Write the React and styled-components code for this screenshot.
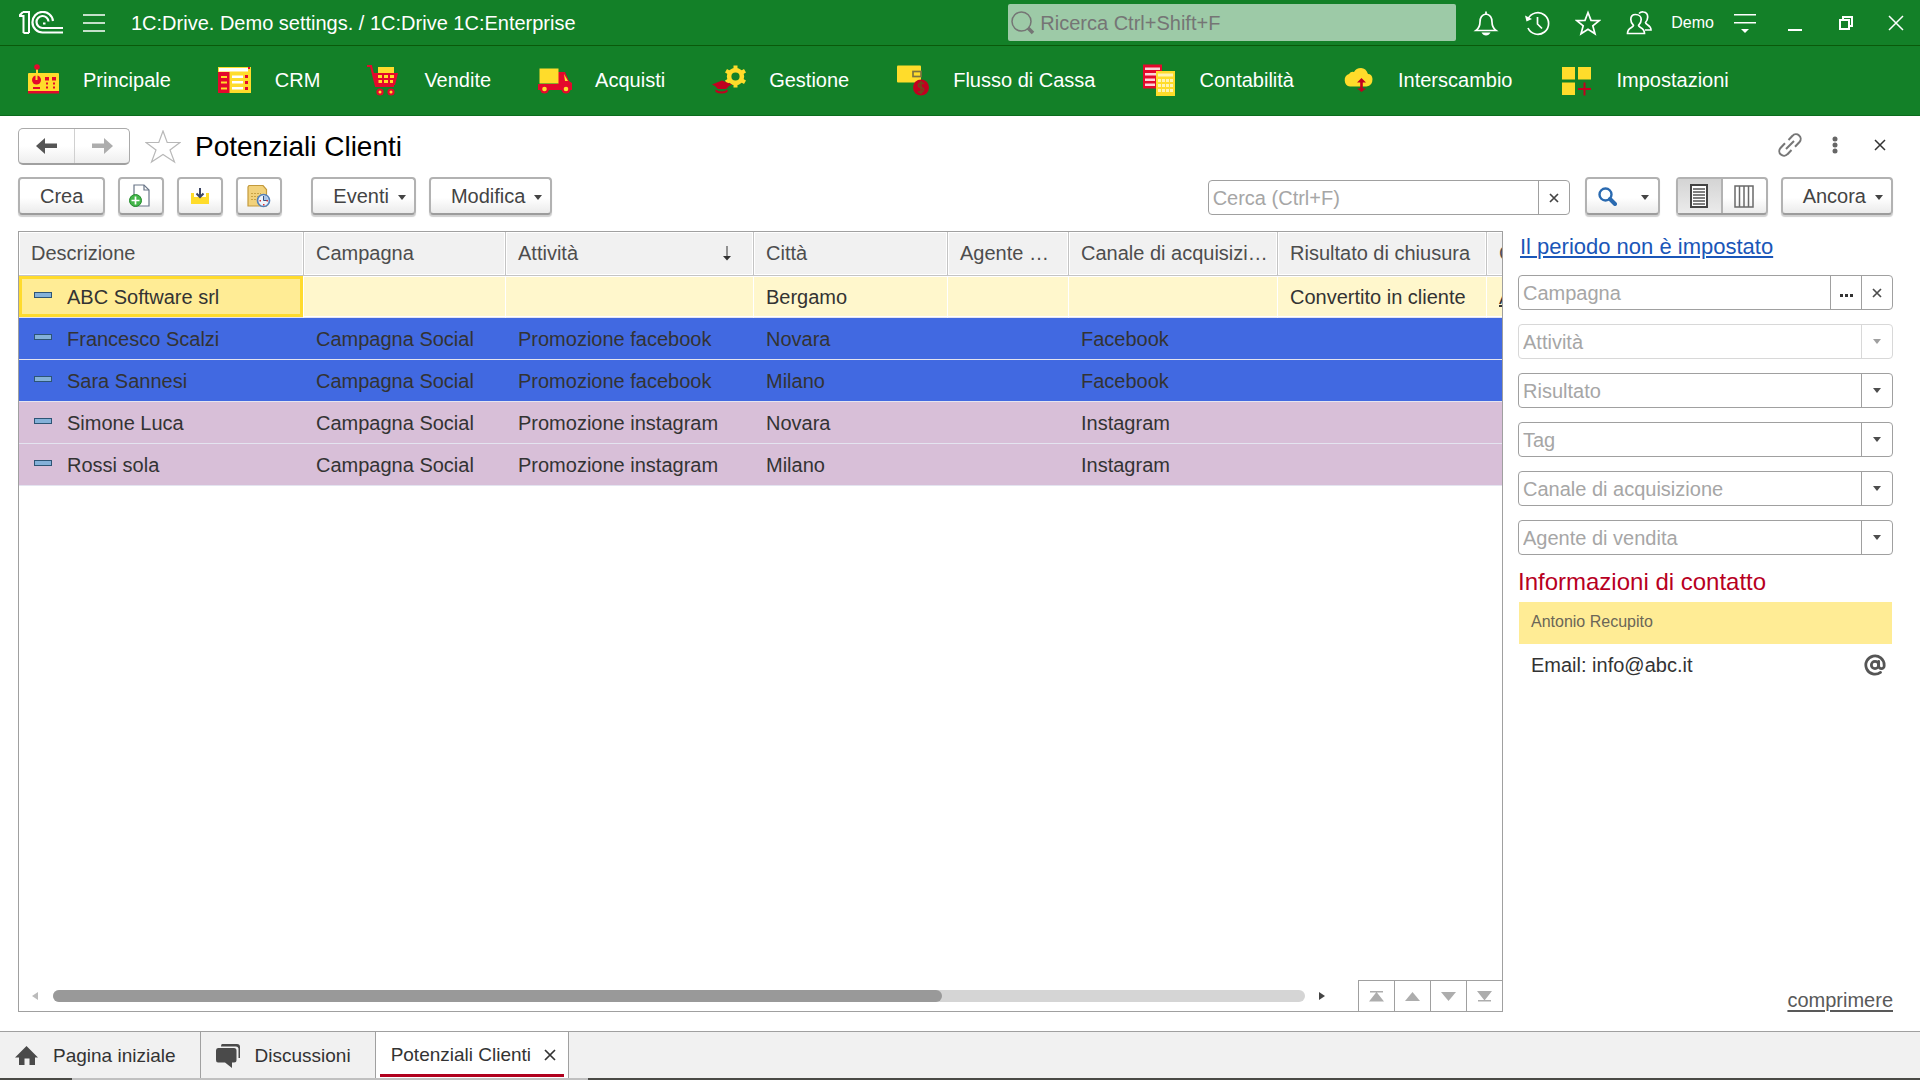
import React from 'react';
import styled, { createGlobalStyle, css } from 'styled-components';
import { AtSign } from 'lucide-react';

const GlobalStyle = createGlobalStyle`
  * {
    box-sizing: border-box;
  }
  body {
    margin: 0;
    background: #fff;
    color: #333;
    font-family: 'Liberation Sans', Arial, sans-serif;
    font-size: 20px;
    line-height: 24px;
  }
  button, input, select {
    font: inherit;
    color: inherit;
    margin: 0;
  }
  button {
    padding: 0;
    border: 0;
    background: none;
    cursor: pointer;
  }
  svg {
    display: block;
    flex: none;
  }
`;

const Page = styled.div`
  display: flex;
  flex-direction: column;
  min-height: 100vh;
`;

/* ---------- top bar ---------- */

const TopBar = styled.header`
  display: flex;
  align-items: center;
  height: 46px;
  padding-left: 19px;
  background: #138028;
  border-bottom: 1px solid #0a5a0a;
  color: #fff;
`;

const MenuButton = styled.button`
  margin: 0 26px 0 19px;
`;

const AppTitle = styled.div`
  flex: 1;
  white-space: nowrap;
`;

const GlobalSearch = styled.label`
  display: flex;
  align-items: center;
  gap: 5px;
  flex: 0 1 448px;
  height: 37px;
  margin-right: 4px;
  padding-left: 3px;
  border-radius: 2px;
  background: #9dcaa7;
  color: #757575;
  input {
    flex: 1;
    min-width: 0;
    padding: 0;
    border: 0;
    outline: 0;
    background: none;
  }
  input::placeholder {
    color: #757575;
    opacity: 1;
  }
`;

const BarButton = styled.button`
  display: flex;
  align-items: center;
  justify-content: center;
  width: ${(p) => p.$width || 51}px;
  height: 44px;
`;

const UserButton = styled.button`
  padding: 0 7px;
  font-size: 16px;
`;

/* ---------- sections ---------- */

const Sections = styled.nav`
  display: flex;
  align-items: center;
  gap: 47px;
  height: 70px;
  padding: 0 0 2px 26px;
  background: #138028;
  border-bottom: 1px solid #0b6b1d;
`;

const SectionLink = styled.a`
  display: flex;
  align-items: center;
  gap: 22px;
  color: #fff;
  text-decoration: none;
  white-space: nowrap;
`;

/* ---------- form header ---------- */

const Main = styled.main`
  flex: 1;
  display: flex;
  flex-direction: column;
  padding: 12px 27px 19px 18px;
`;

const TitleRow = styled.div`
  display: flex;
  align-items: center;
  height: 37px;
`;

const raised = css`
  border: 2px solid #b2b2b2;
  border-bottom-color: #9c9c9c;
  border-radius: 4px;
  background: linear-gradient(#fff 55%, #ebebeb);
  box-shadow: 0 2px 1px #d0d0d0;
`;

const History = styled.div`
  display: flex;
  height: 37px;
  border: 1px solid #aaa;
  border-bottom: 2px solid #a0a0a0;
  border-radius: 5px;
  background: linear-gradient(#fff 50%, #eee);
  button {
    display: flex;
    align-items: center;
    justify-content: center;
    width: 55px;
  }
  button + button {
    border-left: 1px solid #d0d0d0;
  }
`;

const StarButton = styled.button`
  margin: 0 14px 0 15px;
`;

const Title = styled.h1`
  flex: 1;
  margin: 0;
  color: #000;
  font-size: 28px;
  font-weight: 400;
  line-height: 32px;
`;

const TitleTools = styled.div`
  display: flex;
  align-items: center;
  gap: 21px;
  margin: 0 1px 3px 0;
  button {
    display: flex;
    justify-content: center;
    width: 24px;
  }
`;

const Toolbar = styled.div`
  display: flex;
  align-items: center;
  gap: 13px;
  height: 38px;
  margin: 12px 0 16px;
  color: #444;
`;

const Button = styled.button`
  ${raised}
  display: flex;
  align-items: center;
  justify-content: center;
  gap: 9px;
  height: 38px;
  width: ${(p) => (p.$icon ? '46px' : 'auto')};
  padding: ${(p) => (p.$icon ? '0' : p.$menu ? '0 8px 0 20px' : '0 20px')};
`;

const Spacer = styled.div`
  flex: ${(p) => (p.$width ? 'none' : 1)};
  width: ${(p) => p.$width || 0}px;
`;

const SearchBox = styled.div`
  display: flex;
  width: 362px;
  height: 35px;
  margin-top: 3px;
  border: 1px solid #a0a0a0;
  border-radius: 4px;
  input {
    flex: 1;
    min-width: 0;
    padding: 0 4px;
    border: 0;
    outline: 0;
    background: none;
  }
  input::placeholder {
    color: #a6a6a6;
    opacity: 1;
  }
  button {
    display: flex;
    align-items: center;
    justify-content: center;
    width: 31px;
    border-left: 1px solid #a0a0a0;
  }
`;

const FindButton = styled.button`
  ${raised}
  display: flex;
  align-items: center;
  justify-content: space-between;
  width: 75px;
  height: 38px;
  margin: 0 3px 0 2px;
  padding: 0 9px 0 11px;
`;

const Toggle = styled.div`
  ${raised}
  display: flex;
  width: 92px;
  height: 38px;
  button {
    flex: 1;
    display: flex;
    align-items: center;
    justify-content: center;
  }
  button:first-child {
    border-right: 2px solid #b2b2b2;
    background: linear-gradient(#d4d4d4, #ebebeb);
  }
`;

/* ---------- list ---------- */

const Content = styled.div`
  flex: 1;
  display: grid;
  grid-template-columns: minmax(0, 1fr) 375px;
  gap: 15px;
`;

const ListBox = styled.section`
  display: flex;
  flex-direction: column;
  border: 1px solid #a0a0a0;
`;

const ListScroll = styled.div`
  flex: 1;
  overflow: hidden;
`;

const Table = styled.table`
  width: 1620px;
  table-layout: fixed;
  border-collapse: separate;
  border-spacing: 0;
  th, td {
    padding: 0 8px 0 12px;
    text-align: left;
    font-weight: 400;
    white-space: nowrap;
    overflow: hidden;
    text-overflow: ellipsis;
  }
  th {
    height: 44px;
    padding-bottom: 2px;
    border-right: 1px solid #c4c4c4;
    border-bottom: 1px solid #c4c4c4;
    background: #f1f1f1;
    box-shadow: inset 0 0 0 1px #fff;
    color: #4d4d4d;
  }
`;

const SortHead = styled.span`
  display: flex;
  align-items: center;
  justify-content: space-between;
  padding-right: 14px;
`;

const rowColors = {
  current: '#fff7cc',
  facebook: '#4169e1',
  instagram: '#d8bfd8',
};

const Row = styled.tr`
  td {
    height: 42px;
    border-bottom: 1px solid #e4e4f0;
    background: ${(p) => rowColors[p.$kind]};
  }
  td:first-child {
    padding-left: 15px;
  }
  ${(p) =>
    p.$kind === 'current' &&
    css`
      td {
        border-right: 1px solid #fff;
        box-shadow: inset 0 1px #fff, inset 0 -1px #fff;
      }
      td:first-child {
        background: #ffec95;
        box-shadow: inset 0 0 0 3px #ffdb2d;
      }
    `}
`;

const ItemName = styled.span`
  display: flex;
  align-items: center;
  gap: 15px;
`;

const ItemMark = styled.i`
  width: 18px;
  height: 6px;
  margin-bottom: 3px;
  border: 1px solid #2d5575;
  background: #84b1d9;
`;

const CellLink = styled.a`
  color: inherit;
`;

const ListFooter = styled.div`
  display: flex;
  align-items: center;
  height: 31px;
  padding-left: 13px;
`;

const Track = styled.div`
  flex: 1;
  height: 12px;
  margin: 0 14px 0 15px;
  border-radius: 6px;
  background: #d5d5d5;
`;

const Thumb = styled.div`
  width: 71%;
  height: 12px;
  border-radius: 6px;
  background: #999;
`;

const Pager = styled.div`
  display: flex;
  height: 31px;
  margin-left: 33px;
  border-top: 1px solid #a0a0a0;
  button {
    display: flex;
    align-items: center;
    justify-content: center;
    width: 36px;
    border-left: 1px solid #a0a0a0;
  }
`;

/* ---------- filter panel ---------- */

const Side = styled.aside`
  display: flex;
  flex-direction: column;
`;

const PeriodLink = styled.a`
  align-self: flex-start;
  margin: 2px 0 14px 2px;
  color: #1a56b8;
  font-size: 22px;
  line-height: 28px;
  text-decoration-thickness: 2px;
  text-underline-offset: 2px;
`;

const Filters = styled.div`
  display: grid;
  gap: 14px;
`;

const Field = styled.div`
  display: grid;
  grid-template-columns: minmax(0, 1fr) auto auto;
  height: 35px;
  border: 1px solid ${(p) => (p.$disabled ? '#d8d8d8' : '#a0a0a0')};
  border-radius: 4px;
  color: ${(p) => (p.$disabled ? '#a0a0a0' : '#4d4d4d')};
  input, select {
    width: 100%;
    padding: 0 4px;
    border: 0;
    outline: 0;
    background: none;
    color: #a6a6a6;
    opacity: 1;
    appearance: none;
  }
  select {
    grid-area: 1 / 1 / 2 / 4;
  }
  input::placeholder {
    color: #a6a6a6;
    opacity: 1;
  }
`;

const FieldButton = styled.button`
  display: flex;
  align-items: center;
  justify-content: center;
  width: 31px;
  border-left: 1px solid #a0a0a0;
`;

const FieldArrow = styled.span`
  grid-area: 1 / 3;
  display: flex;
  align-items: center;
  justify-content: center;
  width: 31px;
  border-left: 1px solid ${(p) => (p.$disabled ? '#d8d8d8' : '#a0a0a0')};
  pointer-events: none;
`;

const ContactTitle = styled.h2`
  margin: 13px 0 6px;
  color: #b8001f;
  font-size: 24px;
  font-weight: 400;
  line-height: 28px;
`;

const ContactName = styled.div`
  height: 42px;
  margin: 0 1px;
  padding: 8px 12px;
  background: #ffec95;
  color: #6b6657;
  font-size: 16px;
`;

const ContactRow = styled.div`
  display: flex;
  align-items: center;
  justify-content: space-between;
  height: 42px;
  padding: 0 7px 0 13px;
  button {
    color: #555;
  }
`;

const CollapseLink = styled.a`
  align-self: flex-end;
  margin: auto 0 0;
  color: #595959;
  text-underline-offset: 3px;
`;

/* ---------- window tabs ---------- */

const Tabs = styled.nav`
  display: flex;
  height: 47px;
  border-top: 1px solid #a0a0a0;
  background: #f1f1f1;
  font-size: 19px;
`;

const Tab = styled.div`
  display: flex;
  border-right: 1px solid #a0a0a0;
  padding: ${(p) => (p.$active ? '0 4px' : '2px 24px 0 15px')};
  background: ${(p) => (p.$active ? '#fff' : 'none')};
`;

const TabButton = styled.button`
  display: flex;
  align-items: center;
  gap: 15px;
`;

const ActiveLine = styled.div`
  display: flex;
  align-items: center;
  gap: 13px;
  height: 45px;
  padding: 4px 8px 0 11px;
  border-bottom: 3px solid #b0001e;
`;

const Edge = styled.div`
  height: 2px;
  background: linear-gradient(90deg, #4a4a46 72px, #c0c0c0 72px 588px, #4a4a46 588px);
`;

/* ---------- icons ---------- */

const Y = '#ffdc2b';
const R = '#e4082c';
const D = '#c1001f';

const Logo = () => (
  <svg width="45" height="23" viewBox="0 0 45 23" fill="none" stroke="#fff" strokeWidth="2">
    <path d="M0 5h4.500v17M4 1h6v21M0 5l4-4M4.500 22H10" />
    <path d="M34 10A10.300 10.300 0 1 0 23.500 21.500H44" strokeWidth="2.200" />
    <path d="M29.500 10.500A6 6 0 1 0 23.500 17H44" strokeWidth="2.200" />
    <path d="M24 12.500h2.500" />
  </svg>
);

const Caret = () => (
  <svg width="8" height="5" viewBox="0 0 8 5">
    <path d="M0 0h8L4 5z" fill="currentColor" />
  </svg>
);

const ButtonCaret = styled(Caret)``;

const CaretBox = styled.span`
  padding-top: 3px;
`;

const MenuCaret = () => (
  <CaretBox>
    <ButtonCaret />
  </CaretBox>
);

const Cross = ({ size = 10, stroke = 1.7 }) => (
  <svg width={size} height={size} viewBox={`0 0 ${size} ${size}`}>
    <path
      d={`M1 1L${size - 1} ${size - 1}M${size - 1} 1L1 ${size - 1}`}
      stroke="currentColor"
      strokeWidth={stroke}
    />
  </svg>
);

const LineIcon = ({ children, size = 26, stroke = 1.7 }) => (
  <svg width={size} height={size} viewBox="0 0 26 26" fill="none" stroke="currentColor" strokeWidth={stroke}>
    {children}
  </svg>
);

const SectionIcon = ({ children }) => (
  <svg width="35" height="36" viewBox="0 0 35 36">
    {children}
  </svg>
);

const icons = {
  main: (
    <>
      <path d="M10 5h2v8h-2z" fill={Y} />
      <circle cx="11" cy="5" r="2.800" fill={R} />
      <rect x="2" y="11" width="31" height="20" rx="1" fill={Y} />
      <path d="M2 29h31v2.500H2z" fill={R} />
      <circle cx="10.500" cy="18" r="4.500" fill={R} />
      <path d="M9.500 13h2v5h-2z" fill={Y} />
      <path d="M7 25h7v2H7zM19 15h4v3.500h-4zM26 15h4v3.500h-4zM20 20.500h2v2h-2zM27 20.500h2v2h-2zM20 24.500h2v2h-2zM27 24.500h2v2h-2z" fill={R} />
    </>
  ),
  crm: (
    <>
      <path d="M0 5h33v26H0z" fill={Y} />
      <path d="M1 6h29v3.500H1z" fill="#fff" />
      <path d="M0 10h11.500v21H0z" fill={R} />
      <path d="M30 5h2v2h-2z" fill={R} />
      <path d="M3 14h6v2H3zM3 19.500h6v2H3zM3 25.500h6v2H3z" fill={Y} />
      <path d="M14 13.500h11v2.500H14zM14 19h11v2.500H14zM14 25h11v2.500H14z" fill="#fff" />
      <path d="M27 13h3v3h-3zM27 19h3v3h-3zM27 25h3v3h-3z" fill={R} />
    </>
  ),
  sales: (
    <>
      <path d="M11 5h16v9H11z" fill={Y} />
      <path d="M0 4h4l5 20h18" fill="none" stroke={R} strokeWidth="2.200" />
      <path d="M6 11h25l-3 12H9z" fill={R} />
      <path d="M11 13h4v3h-4zM17 13h4v3h-4zM23 13h4v3h-4zM11.500 18h3.500v3h-3.500zM17 18h4v3h-4zM23 18h3v3h-3z" fill={Y} />
      <circle cx="13" cy="30" r="3.600" fill={R} />
      <circle cx="24" cy="30" r="3.600" fill={R} />
      <circle cx="13" cy="30" r="1.500" fill={Y} />
      <circle cx="24" cy="30" r="1.500" fill={Y} />
    </>
  ),
  purchases: (
    <>
      <path d="M0 22h20V10h7l4 9 3 2v7H0z" fill={R} />
      <path d="M1.500 6.500h19v15h-19z" fill={Y} />
      <path d="M26 12l4 7h-3z" fill={Y} />
      <circle cx="6.500" cy="27" r="4.500" fill={R} />
      <circle cx="28" cy="27" r="4.500" fill={R} />
      <circle cx="6.500" cy="27" r="2.300" fill={Y} />
      <circle cx="28" cy="27" r="2.300" fill={Y} />
    </>
  ),
  management: (
    <>
      <circle cx="23.500" cy="14.500" r="6.400" fill="none" stroke={Y} strokeWidth="4.600" />
      <path
        d="M21.500 3.500h4v4h-4zM21.500 21.500h4v4h-4zM13 10.500l2-3.500 3.500 2-2 3.500zM28.500 9l3.500-2 2 3.500-3.500 2zM13 18.500l3.500-2 2 3.500-3.500 2zM30.500 16.500l3.500 2-2 3.500-3.500-2z"
        fill={Y}
      />
      <path d="M0 22.500l10-4 10 4-3 1.500-3 3H6l-3-3z" fill={D} />
      <path d="M3.500 27.500q6.500 4 12 0v2.500q-6 3-12 0z" fill={D} />
    </>
  ),
  cash: (
    <>
      <rect x="1" y="3.500" width="24" height="17" rx="1" fill={Y} />
      <rect x="17" y="9.500" width="8" height="5" fill={Y} stroke="#7c7440" strokeWidth="1.700" />
      <circle cx="25" cy="25.500" r="8" fill={D} />
      <path d="M28 22q-3-2.500-5 0t2 3.500 2 3.500-5 .5M25 19v13" stroke="#6e4a1c" strokeWidth="1.500" fill="none" />
    </>
  ),
  accounting: (
    <>
      <path d="M1 2.500h19v24H1z" fill={R} />
      <path d="M3 5.500h15v2.500H3zM3 11h11v2.500H3zM3 16.500h10v2.500H3zM3 21.500h10v2.500H3z" fill="#fbd3d8" />
      <path d="M14 9h19v25H14z" fill={Y} />
      <path d="M16 11.500h15v3H16zM16 17h3v3h-3zM20 17h3v3h-3zM24 17h3v3h-3zM28 17h3v3h-3zM16 22h3v3h-3zM20 22h3v3h-3zM24 22h3v3h-3zM28 22h3v3h-3zM16 27h3v3h-3zM20 27h3v3h-3zM24 27h3v3h-3zM28 27h3v3h-3z" fill="#fff3b4" />
    </>
  ),
  exchange: (
    <>
      <path d="M9 24.500a6.500 6.500 0 0 1-1-12.500q2-3 5-2 2-4 7-4t7 6q4 0 4.500 5 0 7-6 7.500z" fill={Y} />
      <path d="M20.500 16l4.500 4.500h-3.200v6H25l-4.500 3.500-4.500-3.500h3.200v-6H16z" fill={D} />
    </>
  ),
  settings: (
    <>
      <path d="M2 5h13v12.500H2zM18 5h13v12.500H18zM2 20.500h13V33H2z" fill={Y} />
      <path d="M23.500 20.500h2v13h-2zM18 26h13v2H18z" fill={D} />
    </>
  ),
};

const sections = [
  ['main', 'Principale'],
  ['crm', 'CRM'],
  ['sales', 'Vendite'],
  ['purchases', 'Acquisti'],
  ['management', 'Gestione'],
  ['cash', 'Flusso di Cassa'],
  ['accounting', 'Contabilità'],
  ['exchange', 'Interscambio'],
  ['settings', 'Impostazioni'],
];

const columns = [285, 202, 248, 194, 121, 209, 209, 152];

const rows = [
  { kind: 'current', name: 'ABC Software srl', city: 'Bergamo', result: 'Convertito in cliente', client: 'ABC Software srl' },
  { kind: 'facebook', name: 'Francesco Scalzi', campaign: 'Campagna Social', activity: 'Promozione facebook', city: 'Novara', channel: 'Facebook' },
  { kind: 'facebook', name: 'Sara Sannesi', campaign: 'Campagna Social', activity: 'Promozione facebook', city: 'Milano', channel: 'Facebook' },
  { kind: 'instagram', name: 'Simone Luca', campaign: 'Campagna Social', activity: 'Promozione instagram', city: 'Novara', channel: 'Instagram' },
  { kind: 'instagram', name: 'Rossi sola', campaign: 'Campagna Social', activity: 'Promozione instagram', city: 'Milano', channel: 'Instagram' },
];

const Header = () => (
  <TopBar>
    <Logo />
    <MenuButton aria-label="Menu">
      <svg width="22" height="20" viewBox="0 0 22 20" stroke="#fff" strokeWidth="1.500">
        <path d="M0 2h22M0 10h22M0 18h22" />
      </svg>
    </MenuButton>
    <AppTitle>1C:Drive. Demo settings. / 1C:Drive 1C:Enterprise</AppTitle>
    <GlobalSearch>
      <svg width="24" height="24" viewBox="0 0 24 24" fill="none" stroke="currentColor">
        <circle cx="10.500" cy="10.500" r="9.500" strokeWidth="1.500" />
        <path d="M17 17l5 5" strokeWidth="3.500" />
      </svg>
      <input type="text" placeholder="Ricerca Ctrl+Shift+F" aria-label="Ricerca" />
    </GlobalSearch>
    <BarButton aria-label="Notifiche">
      <LineIcon>
        <path d="M3 20.500q4-3 4-8.500 0-7 6-8 6 1 6 8 0 5.500 4 8.500zM13 4V1.500" />
        <path d="M8.500 22.500h9q-1.500 3-4.500 3t-4.500-3z" fill="#fff" stroke="none" />
      </LineIcon>
    </BarButton>
    <BarButton aria-label="Cronologia">
      <LineIcon>
        <path d="M4 9a10.800 10.800 0 1 1 0 9M13.500 7v7l4.500 4.500" />
        <path d="M1 5.500l1.500 6 5.500-2.500z" fill="#fff" stroke="none" />
      </LineIcon>
    </BarButton>
    <BarButton aria-label="Preferiti">
      <LineIcon>
        <path d="M13 2.500l3 7.800 8.300.3-6.500 5.200 2.200 8-7-4.500-7 4.500 2.200-8-6.500-5.200 8.300-.3z" />
      </LineIcon>
    </BarButton>
    <BarButton aria-label="Utenti">
      <LineIcon>
        <path d="M9.500 4.500c-3.500 0-4.700 2.500-4.700 5 0 3 1.200 4.500 2.700 5.800 0 2.700-6 1.700-6 8.200h17c0-6.500-6-5.500-6-8.200 1.500-1.300 2.700-2.800 2.700-5.800 0-2.500-2-5-5.700-5z" />
        <path d="M13 3.500q2-2 4.500-1.500c3 .3 4.200 2.500 4.200 5 0 3-1.200 4.500-2.200 5.500 0 2.500 5.500 2 5.500 7.500h-6" />
      </LineIcon>
    </BarButton>
    <UserButton>Demo</UserButton>
    <BarButton $width={48} aria-label="Opzioni">
      <svg width="22" height="20" viewBox="0 0 22 20" fill="#fff">
        <path d="M0 1h22v1.500H0zM0 9h22v1.500H0zM7 16h8l-4 4z" />
      </svg>
    </BarButton>
    <BarButton aria-label="Riduci a icona">
      <svg width="14" height="16" viewBox="0 0 14 16">
        <path d="M0 14h14v2H0z" fill="#fff" />
      </svg>
    </BarButton>
    <BarButton aria-label="Ripristina">
      <svg width="14" height="14" viewBox="0 0 14 14" fill="none" stroke="#fff" strokeWidth="2">
        <path d="M1 4h9v9H1zM4 4V1h9v9h-3" />
      </svg>
    </BarButton>
    <BarButton $width={49} aria-label="Chiudi">
      <Cross size={16} stroke={1.5} />
    </BarButton>
  </TopBar>
);

const CommandBar = () => (
  <Toolbar>
    <Button>Crea</Button>
    <Button $icon aria-label="Crea copiando">
      <svg width="24" height="24" viewBox="0 0 24 24">
        <path d="M5 1h10l5 5v16H5z" fill="#fff" stroke="#6a7688" strokeWidth="1.200" />
        <path d="M15 1v5h5" fill="none" stroke="#6a7688" strokeWidth="1.200" />
        <circle cx="6.500" cy="16.500" r="6" fill="#43b649" stroke="#238a2c" />
        <path d="M6.500 12.500v8M2.500 16.500h8" stroke="#fff" strokeWidth="1.700" />
      </svg>
    </Button>
    <Button $icon aria-label="Carica">
      <svg width="18" height="18" viewBox="0 0 18 18">
        <path d="M0 6h3v4h12V6h3v11H0z" fill={Y} />
        <path d="M9 1v9M5.500 6.500L9 10l3.500-3.500" fill="none" stroke="#3b4464" strokeWidth="2" />
      </svg>
    </Button>
    <Button $icon aria-label="Pianifica">
      <svg width="24" height="24" viewBox="0 0 24 24">
        <path d="M2 1.500h14l3.500 4V22H1V3z" fill="#f2d27c" stroke="#c39a3c" strokeWidth="1.200" />
        <path d="M4 9.500h10M4 12.500h7M4 15.500h5" stroke="#c9a344" strokeDasharray="2 1" />
        <circle cx="16.500" cy="16.500" r="6" fill="#eef4fb" stroke="#5581b8" strokeWidth="1.700" />
        <path d="M16.500 11.500v5h4.500a5 5 0 0 0-4.500-5z" fill="#a9c5e8" />
        <path d="M16.500 12v4.500H20" fill="none" stroke="#35527d" />
        <path d="M12.500 16h1.500v1.500h-1.500zM16 20h1.500v1.500H16zM19.500 16H21v1.500h-1.500z" fill="#d33" />
      </svg>
    </Button>
    <Spacer $width={3} />
    <Button $menu>
      Eventi <MenuCaret />
    </Button>
    <Button $menu>
      Modifica <MenuCaret />
    </Button>
    <Spacer />
    <SearchBox>
      <input type="text" placeholder="Cerca (Ctrl+F)" aria-label="Cerca" />
      <button aria-label="Cancella">
        <Cross />
      </button>
    </SearchBox>
    <FindButton aria-label="Trova">
      <svg width="19" height="19" viewBox="0 0 19 19" fill="none" stroke="#2a6ab0">
        <circle cx="7.500" cy="7.500" r="6" strokeWidth="2.400" />
        <path d="M12 12l5 5" strokeWidth="4" strokeLinecap="round" />
      </svg>
      <MenuCaret />
    </FindButton>
    <Toggle>
      <button aria-label="Elenco" aria-pressed="true">
        <svg width="18" height="24" viewBox="0 0 18 24">
          <path d="M1 1h16v22H1z" fill="#fff" stroke="#444" strokeWidth="2" />
          <path d="M3 5h12M3 8h12M3 11h12M3 14h12M3 17h12M3 20h12" stroke="#555" strokeWidth="1.500" />
        </svg>
      </button>
      <button aria-label="Colonne" aria-pressed="false">
        <svg width="20" height="23" viewBox="0 0 20 23" fill="none" stroke="#6a6a6a" strokeWidth="1.500">
          <path d="M1 1h18v21H1zM5.500 1v21M10 1v21M14.500 1v21" />
        </svg>
      </button>
    </Toggle>
    <Button $menu>
      Ancora <MenuCaret />
    </Button>
  </Toolbar>
);

const Leads = () => (
  <ListBox>
    <ListScroll>
      <Table>
        <colgroup>
          {columns.map((width, i) => (
            <col key={i} width={width} />
          ))}
        </colgroup>
        <thead>
          <tr>
            <th>Descrizione</th>
            <th>Campagna</th>
            <th>
              <SortHead>
                Attività
                <svg width="8" height="16" viewBox="0 0 8 16">
                  <path d="M3.500 1h1v10H8l-4 4.500L0 11h3.500z" fill="#333" />
                </svg>
              </SortHead>
            </th>
            <th>Città</th>
            <th>Agente di vendita</th>
            <th>Canale di acquisizione</th>
            <th>Risultato di chiusura</th>
            <th>Cliente</th>
          </tr>
        </thead>
        <tbody>
          {rows.map((row) => (
            <Row key={row.name} $kind={row.kind}>
              <td>
                <ItemName>
                  <ItemMark />
                  {row.name}
                </ItemName>
              </td>
              <td>{row.campaign}</td>
              <td>{row.activity}</td>
              <td>{row.city}</td>
              <td />
              <td>{row.channel}</td>
              <td>{row.result}</td>
              <td>{row.client && <CellLink href="#cliente">{row.client}</CellLink>}</td>
            </Row>
          ))}
        </tbody>
      </Table>
    </ListScroll>
    <ListFooter>
      <button aria-label="Scorri a sinistra">
        <svg width="6" height="8" viewBox="0 0 6 8">
          <path d="M6 0v8L0 4z" fill="#bbb" />
        </svg>
      </button>
      <Track>
        <Thumb />
      </Track>
      <button aria-label="Scorri a destra">
        <svg width="6" height="8" viewBox="0 0 6 8">
          <path d="M0 0v8l6-4z" fill="#444" />
        </svg>
      </button>
      <Pager>
        <button aria-label="Inizio">
          <svg width="15" height="11" viewBox="0 0 15 11" fill="#adadad">
            <path d="M1 0h13v1.500H1zM7.500 1L15 10.500H0z" />
          </svg>
        </button>
        <button aria-label="Su">
          <svg width="15" height="9" viewBox="0 0 15 9" fill="#adadad">
            <path d="M7.500 0L15 9H0z" />
          </svg>
        </button>
        <button aria-label="Giù">
          <svg width="15" height="9" viewBox="0 0 15 9" fill="#adadad">
            <path d="M0 0h15L7.500 9z" />
          </svg>
        </button>
        <button aria-label="Fine">
          <svg width="15" height="11" viewBox="0 0 15 11" fill="#adadad">
            <path d="M0 0h15L7.500 9.500zM1 9h13v1.500H1z" />
          </svg>
        </button>
      </Pager>
    </ListFooter>
  </ListBox>
);

const SelectField = ({ label, disabled }) => (
  <Field $disabled={disabled}>
    <select aria-label={label} disabled={disabled} defaultValue="">
      <option value="">{label}</option>
    </select>
    <FieldArrow $disabled={disabled}>
      <Caret />
    </FieldArrow>
  </Field>
);

const FilterPanel = () => (
  <Side>
    <PeriodLink href="#periodo">Il periodo non è impostato</PeriodLink>
    <Filters>
      <Field>
        <input type="text" placeholder="Campagna" aria-label="Campagna" />
        <FieldButton aria-label="Seleziona">
          <svg width="13" height="9" viewBox="0 0 13 9" fill="#333">
            <path d="M0 6h3v3H0zM5 6h3v3H5zM10 6h3v3h-3z" />
          </svg>
        </FieldButton>
        <FieldButton aria-label="Cancella campagna">
          <Cross />
        </FieldButton>
      </Field>
      <SelectField label="Attività" disabled />
      <SelectField label="Risultato" />
      <SelectField label="Tag" />
      <SelectField label="Canale di acquisizione" />
      <SelectField label="Agente di vendita" />
    </Filters>
    <ContactTitle>Informazioni di contatto</ContactTitle>
    <ContactName>Antonio Recupito</ContactName>
    <ContactRow>
      Email: info@abc.it
      <button aria-label="Scrivi email">
        <AtSign size={22} strokeWidth={3} />
      </button>
    </ContactRow>
    <CollapseLink href="#comprimere">comprimere</CollapseLink>
  </Side>
);

const WindowTabs = () => (
  <Tabs>
    <Tab>
      <TabButton>
        <svg width="23" height="20" viewBox="0 0 23 20" fill="#4a4a4a">
          <path d="M11.500 0L23 11.500h-3V19h-5.500v-6.500h-5V19H4v-7.500H0z" />
        </svg>
        Pagina iniziale
      </TabButton>
    </Tab>
    <Tab>
      <TabButton>
        <svg width="24" height="24" viewBox="0 0 24 24" fill="#4a4a4a">
          <path d="M6 0h15q3 0 3 3v11h-1.500V4.500Q22 2.500 20 2.500H5Q5 0 6 0z" />
          <path d="M2 4h16q2.500 0 2.500 2.500V16q0 2.500-2.500 2.500h-2V24l-7-5.500H2Q0 18.500 0 16V6.500Q0 4 2 4z" />
        </svg>
        Discussioni
      </TabButton>
    </Tab>
    <Tab $active>
      <ActiveLine>
        <TabButton>Potenziali Clienti</TabButton>
        <button aria-label="Chiudi scheda">
          <Cross size={12} />
        </button>
      </ActiveLine>
    </Tab>
  </Tabs>
);

const App = () => {
  return (
    <Page>
      <GlobalStyle />
      <Header />
      <Sections>
        {sections.map(([icon, label]) => (
          <SectionLink key={icon} href={`#${icon}`}>
            <SectionIcon>{icons[icon]}</SectionIcon>
            {label}
          </SectionLink>
        ))}
      </Sections>
      <Main>
        <TitleRow>
          <History>
            <button aria-label="Indietro">
              <svg width="21" height="16" viewBox="0 0 21 16" fill="#555">
                <path d="M9 0v5.500h12v4.500H9v6L0 8z" />
              </svg>
            </button>
            <button aria-label="Avanti">
              <svg width="21" height="16" viewBox="0 0 21 16" fill="#adadad">
                <path d="M12 0v5.500H0v4.500h12v6l9-8z" />
              </svg>
            </button>
          </History>
          <StarButton aria-label="Aggiungi ai preferiti">
            <svg width="36" height="34" viewBox="0 0 36 34" fill="none" stroke="#b8b8b8" strokeWidth="1.200">
              <path d="M18 1l4.200 11.500H35L25 20l4.500 12L18 24.500 6.500 32 11 20 1 12.500h12.800z" />
            </svg>
          </StarButton>
          <Title>Potenziali Clienti</Title>
          <TitleTools>
            <button aria-label="Copia collegamento">
              <svg width="24" height="24" viewBox="0 0 24 24" fill="none" stroke="#777" strokeWidth="2">
                <path d="M8 16l8-8M10.500 7l4-4.200a4.500 4.500 0 0 1 7 6.200l-4.500 4.800M13.500 17l-4 4.200a4.500 4.500 0 0 1-7-6.200L7 10.200" />
              </svg>
            </button>
            <button aria-label="Altro">
              <svg width="6" height="18" viewBox="0 0 6 18" fill="#666">
                <circle cx="3" cy="3" r="2.500" />
                <circle cx="3" cy="9" r="2.500" />
                <circle cx="3" cy="15" r="2.500" />
              </svg>
            </button>
            <button aria-label="Chiudi">
              <Cross size={12} stroke={1.5} />
            </button>
          </TitleTools>
        </TitleRow>
        <CommandBar />
        <Content>
          <Leads />
          <FilterPanel />
        </Content>
      </Main>
      <WindowTabs />
      <Edge />
    </Page>
  );
};

export default App;
